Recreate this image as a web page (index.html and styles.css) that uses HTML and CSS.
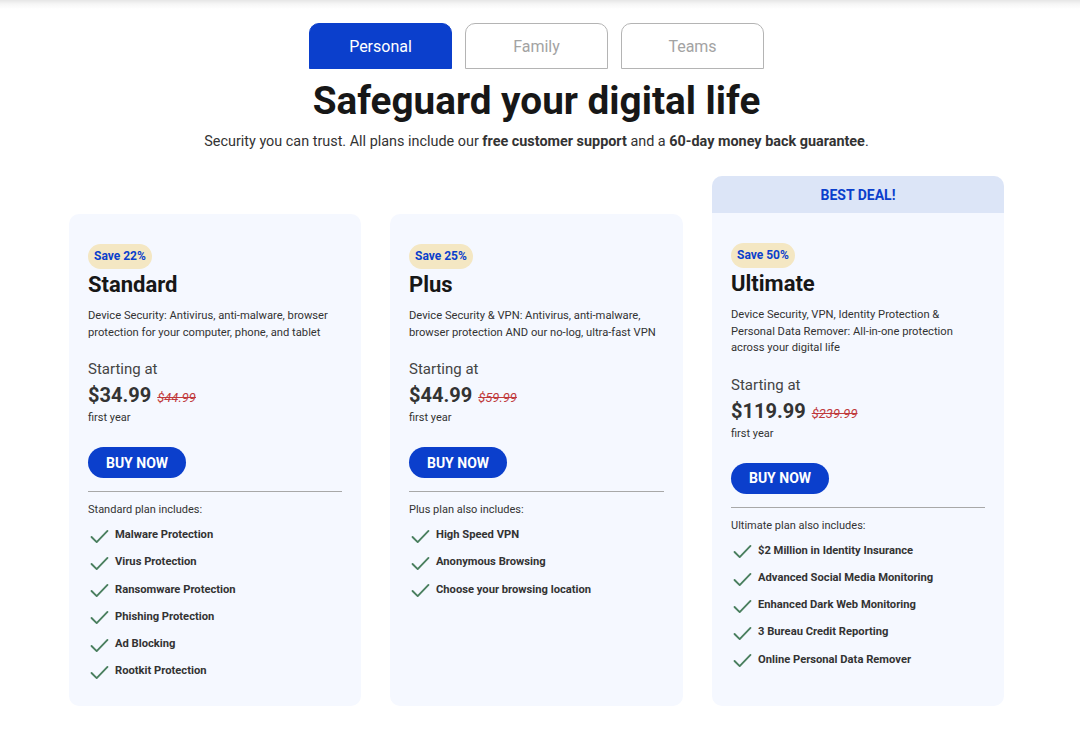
FILE: index.html
```html
<!DOCTYPE html>
<html lang="en">
<head>
<meta charset="utf-8">
<title>Safeguard your digital life</title>
<link rel="stylesheet" href="styles.css">
</head>
<body>
<div class="page">
  <nav class="tabs">
    <button class="tab active">Personal</button>
    <button class="tab">Family</button>
    <button class="tab">Teams</button>
  </nav>
  <h1 class="title">Safeguard your digital life</h1>
  <p class="subtitle">Security you can trust. All plans include our <b>free customer support</b> and a <b>60-day money back guarantee</b>.</p>

  <div class="plans">
    <section class="card">
      <div class="card-body">
        <span class="badge">Save 22%</span>
        <h2 class="plan-name">Standard</h2>
        <p class="desc">Device Security: Antivirus, anti-malware, browser protection for your computer, phone, and tablet</p>
        <div class="starting">Starting at</div>
        <div class="price-row"><span class="price">$34.99</span><s class="old">$44.99</s></div>
        <div class="term">first year</div>
        <button class="buy">BUY NOW</button>
        <hr class="divider">
        <div class="includes">Standard plan includes:</div>
        <ul class="features">
          <li><svg class="check" viewBox="0 0 20 16"><polyline points="1.5,8.5 7,14 18.5,2"/></svg>Malware Protection</li>
          <li><svg class="check" viewBox="0 0 20 16"><polyline points="1.5,8.5 7,14 18.5,2"/></svg>Virus Protection</li>
          <li><svg class="check" viewBox="0 0 20 16"><polyline points="1.5,8.5 7,14 18.5,2"/></svg>Ransomware Protection</li>
          <li><svg class="check" viewBox="0 0 20 16"><polyline points="1.5,8.5 7,14 18.5,2"/></svg>Phishing Protection</li>
          <li><svg class="check" viewBox="0 0 20 16"><polyline points="1.5,8.5 7,14 18.5,2"/></svg>Ad Blocking</li>
          <li><svg class="check" viewBox="0 0 20 16"><polyline points="1.5,8.5 7,14 18.5,2"/></svg>Rootkit Protection</li>
        </ul>
      </div>
    </section>

    <section class="card">
      <div class="card-body">
        <span class="badge">Save 25%</span>
        <h2 class="plan-name">Plus</h2>
        <p class="desc">Device Security &amp; VPN: Antivirus, anti-malware, browser protection AND our no-log, ultra-fast VPN</p>
        <div class="starting">Starting at</div>
        <div class="price-row"><span class="price">$44.99</span><s class="old">$59.99</s></div>
        <div class="term">first year</div>
        <button class="buy">BUY NOW</button>
        <hr class="divider">
        <div class="includes">Plus plan also includes:</div>
        <ul class="features">
          <li><svg class="check" viewBox="0 0 20 16"><polyline points="1.5,8.5 7,14 18.5,2"/></svg>High Speed VPN</li>
          <li><svg class="check" viewBox="0 0 20 16"><polyline points="1.5,8.5 7,14 18.5,2"/></svg>Anonymous Browsing</li>
          <li><svg class="check" viewBox="0 0 20 16"><polyline points="1.5,8.5 7,14 18.5,2"/></svg>Choose your browsing location</li>
        </ul>
      </div>
    </section>

    <section class="card featured">
      <div class="card-head">BEST DEAL!</div>
      <div class="card-body">
        <span class="badge">Save 50%</span>
        <h2 class="plan-name">Ultimate</h2>
        <p class="desc">Device Security, VPN, Identity Protection &amp; Personal Data Remover: All-in-one protection across your digital life</p>
        <div class="starting">Starting at</div>
        <div class="price-row"><span class="price">$119.99</span><s class="old">$239.99</s></div>
        <div class="term">first year</div>
        <button class="buy">BUY NOW</button>
        <hr class="divider">
        <div class="includes">Ultimate plan also includes:</div>
        <ul class="features">
          <li><svg class="check" viewBox="0 0 20 16"><polyline points="1.5,8.5 7,14 18.5,2"/></svg>$2 Million in Identity Insurance</li>
          <li><svg class="check" viewBox="0 0 20 16"><polyline points="1.5,8.5 7,14 18.5,2"/></svg>Advanced Social Media Monitoring</li>
          <li><svg class="check" viewBox="0 0 20 16"><polyline points="1.5,8.5 7,14 18.5,2"/></svg>Enhanced Dark Web Monitoring</li>
          <li><svg class="check" viewBox="0 0 20 16"><polyline points="1.5,8.5 7,14 18.5,2"/></svg>3 Bureau Credit Reporting</li>
          <li><svg class="check" viewBox="0 0 20 16"><polyline points="1.5,8.5 7,14 18.5,2"/></svg>Online Personal Data Remover</li>
        </ul>
      </div>
    </section>
  </div>
</div>
</body>
</html>
```

FILE: styles.css
```css
* { box-sizing: border-box; }

html, body {
  margin: 0;
  padding: 0;
}

body {
  font-family: Roboto, "Liberation Sans", Arial, sans-serif;
  color: #333;
  background: #fff linear-gradient(to bottom, #e6e6e6 0, #f6f6f6 4px, #fff 9px) no-repeat;
  background-size: 100% 9px;
}

.page {
  width: 1073px;
  padding-top: 23px;
}

.tabs {
  display: flex;
  justify-content: center;
  gap: 13px;
}

.tab {
  width: 143px;
  height: 46px;
  border: 1px solid #b4b4b4;
  border-radius: 10px 10px 0 0;
  background: #fff;
  color: #a3a3a3;
  font-family: inherit;
  font-size: 16px;
  padding: 0;
  cursor: pointer;
}

.tab.active {
  background: #0b3fcc;
  border-color: #0b3fcc;
  color: #fff;
}

.title {
  margin: 9px 0 0;
  text-align: center;
  font-size: 38.7px;
  line-height: 46px;
  font-weight: 700;
  color: #171717;
}

.subtitle {
  margin: 8px 0 0;
  text-align: center;
  font-size: 14.4px;
  line-height: 20px;
  color: #333;
}

.subtitle b { font-weight: 700; }

.plans {
  margin: 24px 0 0 69px;
  display: grid;
  grid-template-columns: 292px 293px 292px;
  column-gap: 29px;
  align-items: stretch;
}

.card {
  background: #f5f8ff;
  border-radius: 10px;
  display: flex;
  flex-direction: column;
  margin-top: 38px;
}

.card.featured {
  margin-top: 0;
}

.card-head {
  height: 37px;
  background: #dce5f7;
  border-radius: 10px 10px 0 0;
  color: #0b3fcc;
  font-weight: 700;
  font-size: 14px;
  display: flex;
  align-items: center;
  justify-content: center;
}

.card-body {
  padding: 30px 19px 22px;
  display: flex;
  flex-direction: column;
  align-items: flex-start;
}

.badge {
  display: inline-block;
  background: #f4e7c3;
  color: #0b3fcc;
  font-weight: 700;
  font-size: 12px;
  line-height: 25px;
  height: 25px;
  padding: 0 6px;
  border-radius: 13px;
}

.plan-name {
  margin: 3px 0 0;
  font-size: 22px;
  line-height: 26px;
  font-weight: 700;
  color: #171717;
}

.desc {
  margin: 10px 0 0;
  max-width: 250px;
  font-size: 11.2px;
  line-height: 16.6px;
  color: #333;
}

.starting {
  margin-top: 18px;
  font-size: 15px;
  line-height: 20px;
  color: #444;
}

.price-row {
  margin-top: 4px;
  display: flex;
  align-items: baseline;
  gap: 6px;
}

.price {
  font-size: 20px;
  line-height: 24px;
  font-weight: 700;
  color: #333;
}

.old {
  font-size: 13px;
  font-style: italic;
  color: #c0393b;
}

.term {
  margin-top: 4px;
  font-size: 11px;
  line-height: 14px;
  color: #333;
}

.buy {
  margin-top: 22px;
  height: 31px;
  width: 98px;
  border: 0;
  border-radius: 16px;
  background: #0b3fcc;
  color: #fff;
  font-family: inherit;
  font-weight: 700;
  font-size: 14px;
  padding: 0;
  cursor: pointer;
}

.divider {
  align-self: stretch;
  margin: 13px 0 0;
  border: 0;
  border-top: 1px solid #a8a8a8;
  height: 0;
}

.includes {
  margin-top: 11px;
  font-size: 11px;
  line-height: 14px;
  color: #333;
}

.features {
  list-style: none;
  margin: 4px 0 0;
  padding: 0;
}

.features li {
  display: flex;
  align-items: center;
  height: 27.2px;
  font-size: 11.2px;
  font-weight: 700;
  color: #333;
}

.check {
  width: 19px;
  height: 15px;
  margin: 3px 6px 0 2px;
  fill: none;
  stroke: #4a7f5f;
  stroke-width: 2;
  stroke-linecap: round;
  stroke-linejoin: round;
}
```
